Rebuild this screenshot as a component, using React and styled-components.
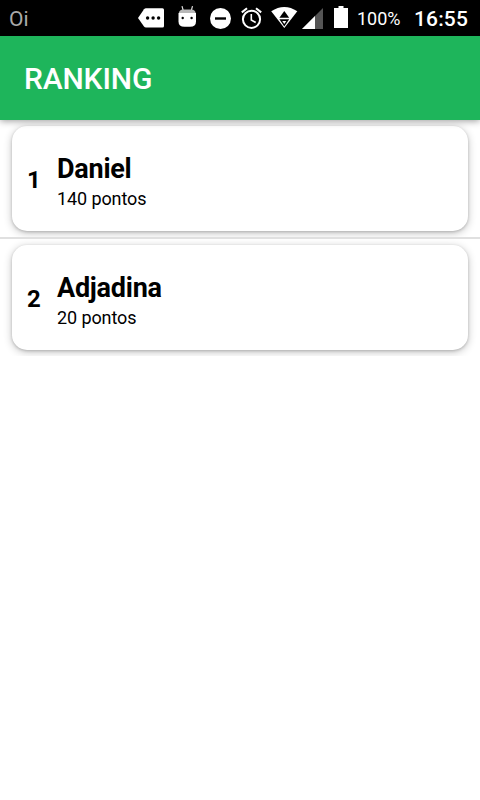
import React from 'react';
import styled, { createGlobalStyle } from 'styled-components';

const GlobalStyle = createGlobalStyle`
  * {
    box-sizing: border-box;
  }

  body {
    margin: 0;
    background: #fff;
    font-family: Roboto, "Liberation Sans", sans-serif;
  }
`;

const Screen = styled.div`
  display: flex;
  flex-direction: column;
  width: 480px;
  height: 800px;
  overflow: hidden;
  background: #fff;
`;

const StatusBar = styled.div`
  display: flex;
  align-items: center;
  flex: none;
  height: 36px;
  padding: 0 12px 0 9px;
  background: #000;
  color: #fff;
`;

const Carrier = styled.span`
  flex: 1;
  font-size: 21px;
  line-height: 36px;
  padding-top: 2px;
  color: #a9a9a9;
`;

const StatusIcon = styled.svg`
  display: block;
  flex: none;
  height: 36px;
  margin-right: ${props => props.$gap}px;
`;

const BatteryLevel = styled.span`
  width: 44px;
  margin-right: 13px;
  padding-top: 1px;
  font-size: 18px;
  line-height: 36px;
`;

const Clock = styled.span`
  width: 54px;
  padding-top: 2px;
  font-size: 21px;
  font-weight: 500;
  letter-spacing: 0.15px;
  line-height: 36px;
  white-space: nowrap;
`;

const Toolbar = styled.header`
  position: relative;
  z-index: 1;
  display: flex;
  align-items: center;
  flex: none;
  height: 84px;
  padding: 2px 24px 0;
  background: #1eb55b;
  box-shadow: 0 1px 7px rgba(0, 0, 0, 0.4);
`;

const Title = styled.h1`
  margin: 0;
  font-size: 30px;
  font-weight: 500;
  letter-spacing: -0.15px;
  line-height: 36px;
  color: #fff;
`;

const List = styled.ul`
  margin: 0;
  padding: 0;
  list-style: none;
`;

const Row = styled.li`
  overflow: hidden;
  padding: 6px 12px;

  & + & {
    border-top: 2px solid #e0e0e0;
  }
`;

const Card = styled.div`
  display: flex;
  align-items: center;
  height: 105px;
  padding: 3px 15px 0;
  border-radius: 15px;
  background: #fff;
  box-shadow: 0 2px 9px rgba(0, 0, 0, 0.24), 0 1px 3px rgba(0, 0, 0, 0.18);
`;

const Position = styled.span`
  width: 30px;
  font-size: 24px;
  font-weight: 700;
  line-height: 28px;
  color: #000;
`;

const Details = styled.div`
  padding-top: 2px;
`;

const Name = styled.p`
  margin: 0;
  font-size: 27px;
  font-weight: 700;
  letter-spacing: -0.25px;
  line-height: 32px;
  color: #000;
`;

const Points = styled.p`
  margin: 3px 0 0;
  font-size: 18px;
  letter-spacing: -0.1px;
  line-height: 21px;
  color: #000;
`;

const players = [
  { name: 'Daniel', points: 140 },
  { name: 'Adjadina', points: 20 },
];

const MessageIcon = () => (
  <StatusIcon width="26" viewBox="0 0 26 36" $gap={14}>
    <path d="M8 8.300H24.500Q26 8.300 26 9.800V26Q26 27.500 24.500 27.500H8Q6.800 27.500 6 26.500L0 17.900L6 9.300Q6.800 8.300 8 8.300Z" fill="#fff" />
    <circle cx="9.600" cy="18" r="1.700" fill="#000" />
    <circle cx="15.100" cy="18" r="1.700" fill="#000" />
    <circle cx="20.600" cy="18" r="1.700" fill="#000" />
  </StatusIcon>
);

const AndroidIcon = () => (
  <StatusIcon width="19" viewBox="0 0 19 36" $gap={13}>
    <path d="M4 6.200L5.200 10.500M14.500 6.200L13.300 10.500" stroke="#ddd" strokeWidth="1.200" />
    <path d="M0.800 13Q1.500 9.500 5 9.500H13.500Q17 9.500 17.700 13Z" fill="#b8b8b8" />
    <path d="M0.500 13H18V21.500Q18 26.800 12 26.800H6.500Q0.500 26.800 0.500 21.500Z" fill="#fff" />
    <circle cx="4.700" cy="18" r="1.200" fill="#000" />
    <circle cx="13.600" cy="18" r="1.200" fill="#000" />
  </StatusIcon>
);

const DoNotDisturbIcon = () => (
  <StatusIcon width="21" viewBox="0 0 21 36" $gap={10}>
    <circle cx="10.500" cy="18.500" r="10.500" fill="#fff" />
    <rect x="5" y="17.300" width="11" height="2.400" fill="#000" />
  </StatusIcon>
);

const AlarmIcon = () => (
  <StatusIcon width="21" viewBox="0 0 21 36" $gap={9}>
    <g fill="none" stroke="#fff" strokeWidth="2">
      <circle cx="10.500" cy="19.300" r="8.600" />
      <path d="M0.800 12.400L6 8.200M20.200 12.400L15 8.200" />
      <path d="M10.300 14V20L14.700 22.500" strokeWidth="1.600" />
    </g>
  </StatusIcon>
);

const WifiIcon = () => (
  <StatusIcon width="27" viewBox="0 0 27 36" $gap={4}>
    <path d="M0.200 11.300Q13.300 2.700 26.300 11.300L13.300 28Z" fill="#fff" />
    <path d="M13.300 11L18.200 17.800H8.400Z" fill="#000" />
    <path d="M8.400 19.300H18.200L13.300 26.500Z" fill="#000" />
    <path d="M11.300 21H15.300L13.300 24Z" fill="#fff" />
  </StatusIcon>
);

const SignalIcon = () => (
  <StatusIcon width="21" viewBox="0 0 21 36" $gap={11}>
    <path d="M21 8V29H0Z" fill="#555" />
    <path d="M13 16V29H0Z" fill="#fff" />
  </StatusIcon>
);

const BatteryIcon = () => (
  <StatusIcon width="14" viewBox="0 0 14 36" $gap={9}>
    <path d="M4.500 6H9.500V8H14V28H0V8H4.500Z" fill="#fff" />
  </StatusIcon>
);

const RankingItem = ({ position, name, points }) => (
  <Row>
    <Card>
      <Position>{position}</Position>
      <Details>
        <Name>{name}</Name>
        <Points>{points} pontos</Points>
      </Details>
    </Card>
  </Row>
);

function App() {
  return (
    <Screen>
      <GlobalStyle />
      <StatusBar>
        <Carrier>Oi</Carrier>
        <MessageIcon />
        <AndroidIcon />
        <DoNotDisturbIcon />
        <AlarmIcon />
        <WifiIcon />
        <SignalIcon />
        <BatteryIcon />
        <BatteryLevel>100%</BatteryLevel>
        <Clock>16:55</Clock>
      </StatusBar>
      <Toolbar>
        <Title>RANKING</Title>
      </Toolbar>
      <List>
        {
          players.map((player, i) => (
            <RankingItem
              key={player.name}
              position={i + 1}
              name={player.name}
              points={player.points} />
          ))
        }
      </List>
    </Screen>
  );
}

export default App;
